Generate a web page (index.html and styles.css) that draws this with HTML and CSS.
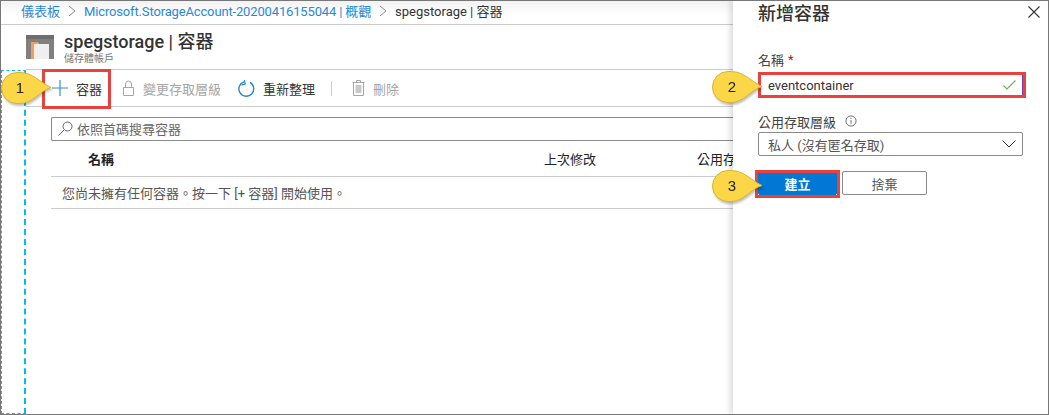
FILE: index.html
```html
<!DOCTYPE html>
<html>
<head>
<meta http-equiv="Content-Type" content="text/html; charset=utf-8"/>
<title>spegstorage | 容器</title>
<link rel="stylesheet" href="styles.css">
</head>
<body>
<div class="frame">
  <div class="main">
    <div class="crumbs">
      <a>儀表板</a>
      <svg class="sep" width="8" height="12" viewBox="0 0 8 12"><path d="M1 1l6 5-6 5" fill="none" stroke="#8a8a8a"/></svg>
      <a class="tight">Microsoft.StorageAccount-20200416155044 | 概觀</a>
      <svg class="sep" width="8" height="12" viewBox="0 0 8 12"><path d="M1 1l6 5-6 5" fill="none" stroke="#8a8a8a"/></svg>
      <span>spegstorage | 容器</span>
    </div>
    <div class="head">
      <svg class="logo" width="28" height="24" viewBox="0 0 28 24">
        <rect width="28" height="24" fill="#808080"/>
        <rect width="28" height="4" fill="#6e6e6e"/>
        <path d="M5 7h6l2 2h10v15H5z" fill="#efefef"/>
        <path d="M5 7h6l1 2H8v15H5z" fill="#f59d56"/>
      </svg>
      <div>
        <h1>spegstorage | 容器</h1>
        <div class="sub">儲存體帳戶</div>
      </div>
    </div>
    <div class="body">
      <div class="rail"></div>
      <div class="content">
        <div class="toolbar">
          <div class="tool wide">
            <svg width="16" height="16" viewBox="0 0 16 16"><path d="M8 0v16M0 8h16" stroke="#2f8fd8" stroke-width="1.2"/></svg>
            <span>容器</span>
          </div>
          <div class="tool off">
            <svg width="13" height="16" viewBox="0 0 13 16"><path d="M1.500 7.500h10v8h-10zM3.500 7.500V4a3 3 0 0 1 6 0v3.500" fill="none" stroke="#a6a6a6"/></svg>
            <span>變更存取層級</span>
          </div>
          <div class="tool">
            <svg width="17" height="17" viewBox="0 0 17 17"><path d="M6 1.800A7.400 7.400 0 1 0 12 2.400" fill="none" stroke="#1f7fd0" stroke-width="1.300"/><path d="M6.800 0v4.300H2.800" fill="none" stroke="#1f7fd0" stroke-width="1.100" transform="rotate(-12 6 2)"/></svg>
            <span>重新整理</span>
          </div>
          <div class="divider"></div>
          <div class="tool off">
            <svg width="13" height="16" viewBox="0 0 13 16"><path d="M.5 2.500h12M4.500 2.500V.5h4v2M1.500 2.500h10v13h-10z" fill="none" stroke="#a6a6a6"/><rect x="3.500" y="5" width="6" height="8" fill="#c8c8c8"/></svg>
            <span>刪除</span>
          </div>
        </div>
        <div class="search">
          <svg width="15" height="15" viewBox="0 0 15 15"><circle cx="9.500" cy="5.500" r="4.500" fill="none" stroke="#666"/><path d="M6.200 8.800L.5 14.500" stroke="#666"/></svg>
          <span>依照首碼搜尋容器</span>
        </div>
        <div class="row thead">
          <span class="c-name">名稱</span>
          <span class="c-date">上次修改</span>
          <span class="c-pub">公用存</span>
        </div>
        <div class="row empty">您尚未擁有任何容器。按一下 [+ 容器] 開始使用。</div>
      </div>
    </div>
  </div>

  <div class="panel">
    <div class="panel-head">
      <h2>新增容器</h2>
      <svg width="12" height="12" viewBox="0 0 12 12"><path d="M.5.5l11 11M11.500.5l-11 11" stroke="#333" stroke-width="1.100"/></svg>
    </div>
    <label class="lbl first">名稱 <b>*</b></label>
    <div class="input">
      <span>eventcontainer</span>
      <svg width="13" height="10" viewBox="0 0 13 10"><path d="M.5 5.500l3.500 3.500 8.500-8.500" fill="none" stroke="#6ab04c" stroke-width="1.100"/></svg>
    </div>
    <label class="lbl second">公用存取層級
      <svg width="12" height="12" viewBox="0 0 13 13"><circle cx="6.500" cy="6.500" r="5.500" fill="none" stroke="#666"/><path d="M6.500 5.500v4M6.500 3.200v1.200" stroke="#666"/></svg>
    </label>
    <div class="select">
      <span>私人 (沒有匿名存取)</span>
      <svg width="14" height="8" viewBox="0 0 14 8"><path d="M.5.5l6.500 6.500 6.500-6.500" fill="none" stroke="#333"/></svg>
    </div>
    <div class="buttons">
      <button class="btn primary">建立</button>
      <button class="btn">捨棄</button>
    </div>
  </div>

  <div class="mark m-add"></div>
  <div class="mark m-input"></div>
  <div class="mark m-create"></div>

  <svg class="callout c1" width="50" height="32" viewBox="0 0 50 32"><path d="M15 .5h3c13 0 20 10 31 15-11 3-18 16-31 16h-3a15.500 15.500 0 0 1 0-31z" fill="#fbd748" stroke="#d9b431"/><text x="18" y="21" class="num">1</text></svg>
  <svg class="callout c2" width="50" height="32" viewBox="0 0 50 32"><path d="M15 .5h3c13 0 20 10 31 15-11 3-18 16-31 16h-3a15.500 15.500 0 0 1 0-31z" fill="#fbd748" stroke="#d9b431"/><text x="19" y="21" class="num">2</text></svg>
  <svg class="callout c3" width="50" height="32" viewBox="0 0 50 32"><path d="M15 .5h3c13 0 20 10 31 15-11 3-18 16-31 16h-3a15.500 15.500 0 0 1 0-31z" fill="#fbd748" stroke="#d9b431"/><text x="19" y="21" class="num">3</text></svg>
</div>
</body>
</html>
```

FILE: styles.css
```css
* {
  box-sizing: border-box;
}

html, body {
  margin: 0;
  padding: 0;
  background: white;
}

body {
  font-family: Roboto, "Noto Sans CJK TC", sans-serif;
  font-size: 13px;
  color: #333;
}

.frame {
  position: relative;
  display: flex;
  width: 1049px;
  height: 415px;
  border: 1px solid #777;
  overflow: hidden;
}

.main {
  width: 732px;
  flex: none;
  display: flex;
  flex-direction: column;
}

.crumbs {
  display: flex;
  align-items: center;
  gap: 8px;
  height: 24px;
  padding: 0 0 4px 20px;
  border-bottom: 1px solid #ccc;
  background: linear-gradient(#f2f2f2, #fff 60%);
  white-space: nowrap;
}

.crumbs a {
  color: #2b88d8;
}

.crumbs .tight {
  letter-spacing: -0.15px;
}

.crumbs span {
  color: #333;
}

.head {
  display: flex;
  align-items: flex-start;
  gap: 10px;
  height: 44px;
  padding: 7px 0 0 25px;
}

.logo {
  margin-top: 3px;
}

.head h1 {
  margin: 0;
  font-size: 18px;
  line-height: 20px;
  font-weight: 500;
  color: #333;
}

.sub {
  margin-top: 1px;
  font-size: 10px;
  line-height: 11px;
  color: #777;
}

.body {
  flex: 1;
  display: flex;
}

.rail {
  width: 25px;
  flex: none;
  margin-top: 1px;
  border: 1px dashed #00bcf2;
  border-right-width: 2px;
}

.content {
  flex: 1;
}

.toolbar {
  display: flex;
  align-items: center;
  height: 38px;
  padding-left: 26px;
  border-top: 1px solid #ccc;
  border-bottom: 1px solid #ccc;
}

.tool {
  display: flex;
  align-items: center;
  gap: 8px;
  margin-right: 16px;
  white-space: nowrap;
}

.tool.wide {
  margin-right: 20px;
}

.tool.off {
  margin-right: 17px;
  color: #a6a6a6;
}

.divider {
  width: 1px;
  height: 15px;
  margin-right: 20px;
  background: #ccc;
}

.search {
  display: flex;
  align-items: center;
  gap: 4px;
  height: 24px;
  margin: 10px 0 0 25px;
  padding: 0 0 2px 6px;
  border: 1px solid #8a8a8a;
  border-right: 0;
  border-radius: 2px 0 0 2px;
  color: #666;
}

.row {
  display: flex;
  align-items: center;
  margin-left: 25px;
  border-bottom: 1px solid #ccc;
  white-space: nowrap;
}

.thead {
  height: 36px;
  color: #222;
}

.c-name {
  width: 493px;
  flex: none;
  padding-left: 37px;
  font-weight: bold;
}

.c-date {
  width: 153px;
  flex: none;
}

.empty {
  height: 32px;
  padding-left: 11px;
  color: #555;
}

.panel {
  flex: 1;
  padding: 0 26px 0 25px;
  background: white;
  box-shadow: -3px 0 6px rgba(0, 0, 0, 0.14);
  z-index: 1;
}

.panel-head {
  display: flex;
  align-items: center;
  justify-content: space-between;
  height: 21px;
  margin-right: -19px;
  padding-right: 2px;
}

.panel-head h2 {
  margin: 0;
  font-size: 18px;
  font-weight: 500;
  color: #333;
}

.lbl {
  display: flex;
  align-items: center;
  gap: 4px;
  height: 16px;
  color: #444;
}

.lbl b {
  color: #a4262c;
  font-weight: normal;
}

.lbl.first {
  margin-top: 29px;
}

.lbl.second {
  gap: 9px;
  margin-top: 16px;
}

.input, .select {
  display: flex;
  align-items: center;
  justify-content: space-between;
  width: 265px;
  height: 24px;
  padding: 0 6px 0 9px;
  border: 1px solid #8a8a8a;
  border-radius: 2px;
}

.input {
  margin-top: 6px;
  border-right-color: #7a3ea8;
}

.select {
  margin-top: 3px;
  color: #555;
}

.buttons {
  display: flex;
  gap: 5px;
  margin-top: 15px;
}

.btn {
  width: 85px;
  height: 24px;
  padding: 0;
  font: inherit;
  color: #555;
  background: white;
  border: 1px solid #8a8a8a;
  border-radius: 2px;
}

.btn.primary {
  width: 79px;
  color: white;
  font-weight: bold;
  background: #0078d4;
  border-color: #0078d4;
}

/* annotations drawn on top of the screenshot */
.mark {
  position: absolute;
  border: 3px solid #e8423f;
  z-index: 2;
}

.m-add {
  left: 41px;
  top: 68px;
  width: 69px;
  height: 40px;
}

.m-input {
  left: 757px;
  top: 71px;
  width: 268px;
  height: 26px;
}

.m-create {
  left: 754px;
  top: 169px;
  width: 85px;
  height: 28px;
}

.callout {
  position: absolute;
  overflow: visible;
  filter: drop-shadow(1px 2px 1px rgba(0, 0, 0, 0.25));
  z-index: 3;
}

.c1 {
  left: 1px;
  top: 71px;
}

.c2 {
  left: 712px;
  top: 70px;
}

.c3 {
  left: 712px;
  top: 169px;
}

.num {
  font-family: "Liberation Sans", sans-serif;
  font-size: 15px;
  text-anchor: middle;
  fill: #222;
}
```
